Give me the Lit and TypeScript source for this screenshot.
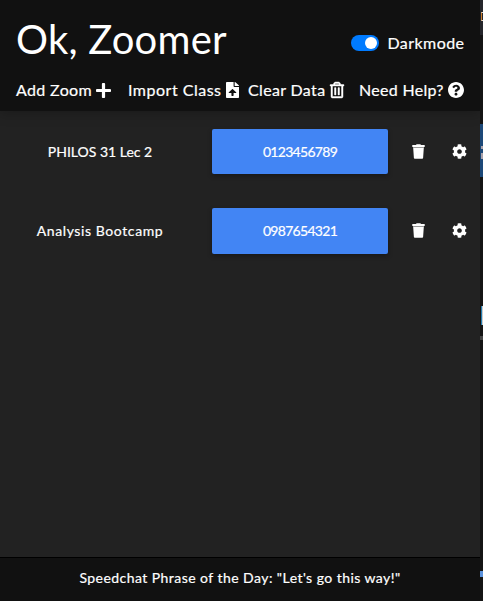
import { LitElement, html, css } from "lit";
import { customElement } from "lit/decorators.js";

const plus = html`<svg class="plus" viewBox="0 0 448 448"><path d="M416 176H272V32c0-18-14-32-32-32h-32c-18 0-32 14-32 32v144H32c-18 0-32 14-32 32v32c0 18 14 32 32 32h144v144c0 18 14 32 32 32h32c18 0 32-14 32-32V272h144c18 0 32-14 32-32v-32c0-18-14-32-32-32z"/></svg>`;
const upload = html`<svg class="file" viewBox="0 0 384 512" preserveAspectRatio="none"><path d="M224 136V0H24C10.700 0 0 10.700 0 24v464c0 13.300 10.700 24 24 24h336c13.300 0 24-10.700 24-24V160H248c-13.200 0-24-10.800-24-24zm65.180 216H224v80c0 8.840-7.160 16-16 16h-32c-8.840 0-16-7.160-16-16v-80H94.820c-14.280 0-21.410-17.290-11.270-27.360l96.420-95.700c6.650-6.610 17.390-6.610 24.040 0l96.420 95.700c10.150 10.070 3.030 27.360-11.250 27.360zM377 105L279.100 7c-4.500-4.500-10.600-7-17-7H256v128h128v-6.100c0-6.300-2.500-12.400-7-16.900z"/></svg>`;
const bin = html`<svg class="bin" viewBox="0 0 448 512"><path d="M268 416h24a12 12 0 0 0 12-12V188a12 12 0 0 0-12-12h-24a12 12 0 0 0-12 12v216a12 12 0 0 0 12 12zM432 80h-82.410l-34-56.700A48 48 0 0 0 274.410 0H173.590a48 48 0 0 0-41.160 23.300L98.410 80H16A16 16 0 0 0 0 96v16a16 16 0 0 0 16 16h16v336a48 48 0 0 0 48 48h288a48 48 0 0 0 48-48V128h16a16 16 0 0 0 16-16V96a16 16 0 0 0-16-16zM171.840 50.910A6 6 0 0 1 177 48h94a6 6 0 0 1 5.150 2.910L293.610 80H154.390zM368 464H80V128h288zm-212-48h24a12 12 0 0 0 12-12V188a12 12 0 0 0-12-12h-24a12 12 0 0 0-12 12v216a12 12 0 0 0 12 12z"/></svg>`;
const help = html`<svg class="help" viewBox="8 8 496 496"><path d="M504 256c0 137-111 248-248 248S8 393 8 256 119 8 256 8s248 111 248 248zM262.700 90c-54.500 0-89.300 23-116.500 63.800-3.500 5.300-2.400 12.400 2.700 16.300l34.700 26.300c5.200 3.900 12.600 3 16.700-2.100 17.900-22.700 30.100-35.800 57.300-35.800 20.400 0 45.700 13.100 45.700 33 0 15-12.400 22.700-32.500 34C247.100 238.500 216 254.900 216 296v4c0 6.600 5.400 12 12 12h56c6.600 0 12-5.400 12-12v-1.300c0-28.500 83.200-29.600 83.200-106.700 0-58-60.200-102-116.500-102zM256 338c-25.400 0-46 20.600-46 46s20.600 46 46 46 46-20.600 46-46-20.600-46-46-46z"/></svg>`;
const trash = html`<svg class="trash" viewBox="0 0 13 15"><path d="M4 1 4.600.3h3.800L9 1h3.700v2H.3V1zM1.200 4h10.600l-.7 10q-.1.800-.9.800H2.800q-.8 0-.9-.8z"/><path class="lid" d="M1 3h11v1H1z"/></svg>`;
const gear = html`<svg class="gear" viewBox="0 0 512 512"><path d="M487.400 315.700l-42.600-24.600c4.300-23.200 4.300-47 0-70.200l42.600-24.600c4.900-2.800 7.100-8.600 5.500-14-11.100-35.600-30-67.800-54.700-94.600-3.800-4.100-10-5.100-14.800-2.300L380.800 110c-17.900-15.400-38.500-27.300-60.800-35.100V25.800c0-5.600-3.900-10.500-9.400-11.700-36.700-8.200-74.300-7.800-109.200 0-5.500 1.200-9.400 6.100-9.400 11.700V75c-22.200 7.900-42.800 19.800-60.800 35.100L88.700 85.500c-4.900-2.800-11-1.900-14.800 2.300-24.700 26.700-43.600 58.900-54.700 94.600-1.700 5.400.6 11.200 5.500 14L67.300 221c-4.300 23.200-4.300 47 0 70.200l-42.600 24.600c-4.900 2.800-7.100 8.600-5.500 14 11.100 35.600 30 67.800 54.700 94.600 3.800 4.100 10 5.100 14.800 2.300l42.600-24.600c17.900 15.400 38.500 27.300 60.800 35.100v49.200c0 5.600 3.900 10.500 9.400 11.700 36.700 8.200 74.300 7.800 109.200 0 5.500-1.200 9.400-6.100 9.400-11.700v-49.200c22.200-7.900 42.800-19.800 60.800-35.100l42.600 24.600c4.900 2.800 11 1.900 14.800-2.300 24.700-26.700 43.600-58.900 54.700-94.600 1.500-5.500-.7-11.300-5.600-14.100zM256 336c-44.100 0-80-35.900-80-80s35.900-80 80-80 80 35.900 80 80-35.900 80-80 80z"/></svg>`;

const nav = [
  { label: "Add Zoom", icon: plus, cls: "add" },
  { label: "Import Class", icon: upload, cls: "import" },
  { label: "Clear Data", icon: bin, cls: "clear" },
  { label: "Need Help?", icon: help, cls: "need" },
];

const rooms = [
  { name: "PHILOS 31 Lec 2", id: "0123456789", cls: "first" },
  { name: "Analysis Bootcamp", id: "0987654321", cls: "second" },
];

@customElement("app-root")
export class AppRoot extends LitElement {
  static styles = css`
    :host { display: flex; width: 483px; height: 601px; overflow: hidden; background: #111;
      color: #fff; font: 16px/24px Lato, "Open Sans", sans-serif; }
    * { box-sizing: border-box; }
    svg { fill: currentColor; display: block; flex: none; }
    span { white-space: nowrap; -webkit-text-stroke: .2px currentColor; }
    .popup { width: 480px; display: flex; flex-direction: column; background: #222; }
    header { height: 111px; background: #111; padding: 9px 16px 0; box-shadow: 0 2px 12px rgba(0,0,0,.25); }
    .top { display: flex; justify-content: space-between; height: 60px; }
    h1 { margin: 0; font-size: 40px; line-height: 60px; font-weight: 400; letter-spacing: .25px; white-space: nowrap; }
    .mode { display: flex; align-items: center; height: 24px; margin-top: 22px; }
    .dark { letter-spacing: .45px; margin-right: -.5px; }
    .switch { width: 28px; height: 16px; border-radius: 8px; background: #007bff; padding: 2px; margin-right: 8px;
      display: flex; justify-content: flex-end; }
    .knob { width: 12px; height: 12px; border-radius: 50%; background: #fff; }
    nav { display: flex; padding-top: 9px; }
    .item { display: flex; align-items: center; justify-content: space-between; height: 24px; letter-spacing: .35px; }
    .add { width: 95px; margin-right: 17px; }
    .import { width: 111px; margin-right: 9px; letter-spacing: .5px; }
    .clear { width: 96px; margin-right: 15px; }
    .need { width: 105px; letter-spacing: .3px; }
    .plus { width: 15px; height: 15px; }
    .file { width: 13px; height: 16px; }
    .bin { width: 14px; height: 16px; stroke: currentColor; stroke-width: 14; overflow: visible; }
    .help { width: 16px; height: 16px; }
    main { flex: 1; padding-top: 18px; }
    .row { display: flex; align-items: center; height: 45px; margin-bottom: 34px; font-size: 14px; }
    .name { width: 200px; text-align: center; }
    .second .name { letter-spacing: .6px; }
    .join { width: 176px; height: 45px; margin-left: 12px; border-radius: 2px; background: #4285f4;
      display: flex; align-items: center; justify-content: center; box-shadow: 0 2px 5px rgba(0,0,0,.3); }
    .num { letter-spacing: -.7px; }
    .second .join { height: 46px; }
    .second { height: 46px; }
    .trash { width: 13px; height: 15px; margin-left: 24px; }
    .second svg { margin-bottom: 1px; }
    .lid { fill: #999; }
    .gear { width: 15px; height: 15px; margin-left: 26.500px; }
    footer { height: 44px; border-top: 1px solid #000; background: #111; font-size: 14px; padding-bottom: 3px;
      letter-spacing: .45px; display: flex; align-items: center; justify-content: center; }
    .page { width: 3px; display: flex; flex-direction: column; background: #141414; }
    .tab { height: 35px; background: #25262b; padding: 12px 0 0 1px; }
    .glyph { height: 9px; border: 1px solid #ddd; border-right: 0; border-left-color: #c87a2b; }
    .banner { height: 53px; margin-top: 89px; padding: 22px 0 0 1px; background: #1c4878; }
    .mark { height: 3px; background: #a9a0a8; }
    .tail { height: 6px; margin-top: 4px; background: #a9a0a8; }
    .field { height: 19px; margin: 129px 0 0 1px; border-left: 1px solid #217caf; background: #ccc; }
    .rule { height: 4px; margin-top: 11px; background: #444; }
    .link { height: 6px; margin-top: 231px; background: #5b92dc; }
  `;

  render() {
    return html`
      <div class="popup">
        <header>
          <div class="top">
            <h1>Ok, Zoomer</h1>
            <div class="mode"><div class="switch"><div class="knob"></div></div><span class="dark">Darkmode</span></div>
          </div>
          <nav>${nav.map((n) => html`<div class="item ${n.cls}"><span>${n.label}</span>${n.icon}</div>`)}</nav>
        </header>
        <main>
          ${rooms.map((r) => html`<div class="row ${r.cls}">
            <span class="name">${r.name}</span>
            <div class="join"><span class="num">${r.id}</span></div>
            ${trash}${gear}
          </div>`)}
        </main>
        <footer><span class="phrase">Speedchat Phrase of the Day: "Let's go this way!"</span></footer>
      </div>
      <div class="page">
        <div class="tab"><div class="glyph"></div></div>
        <div class="banner"><div class="mark"></div><div class="tail"></div></div>
        <div class="field"></div>
        <div class="rule"></div>
        <div class="link"></div>
      </div>`;
  }
}
